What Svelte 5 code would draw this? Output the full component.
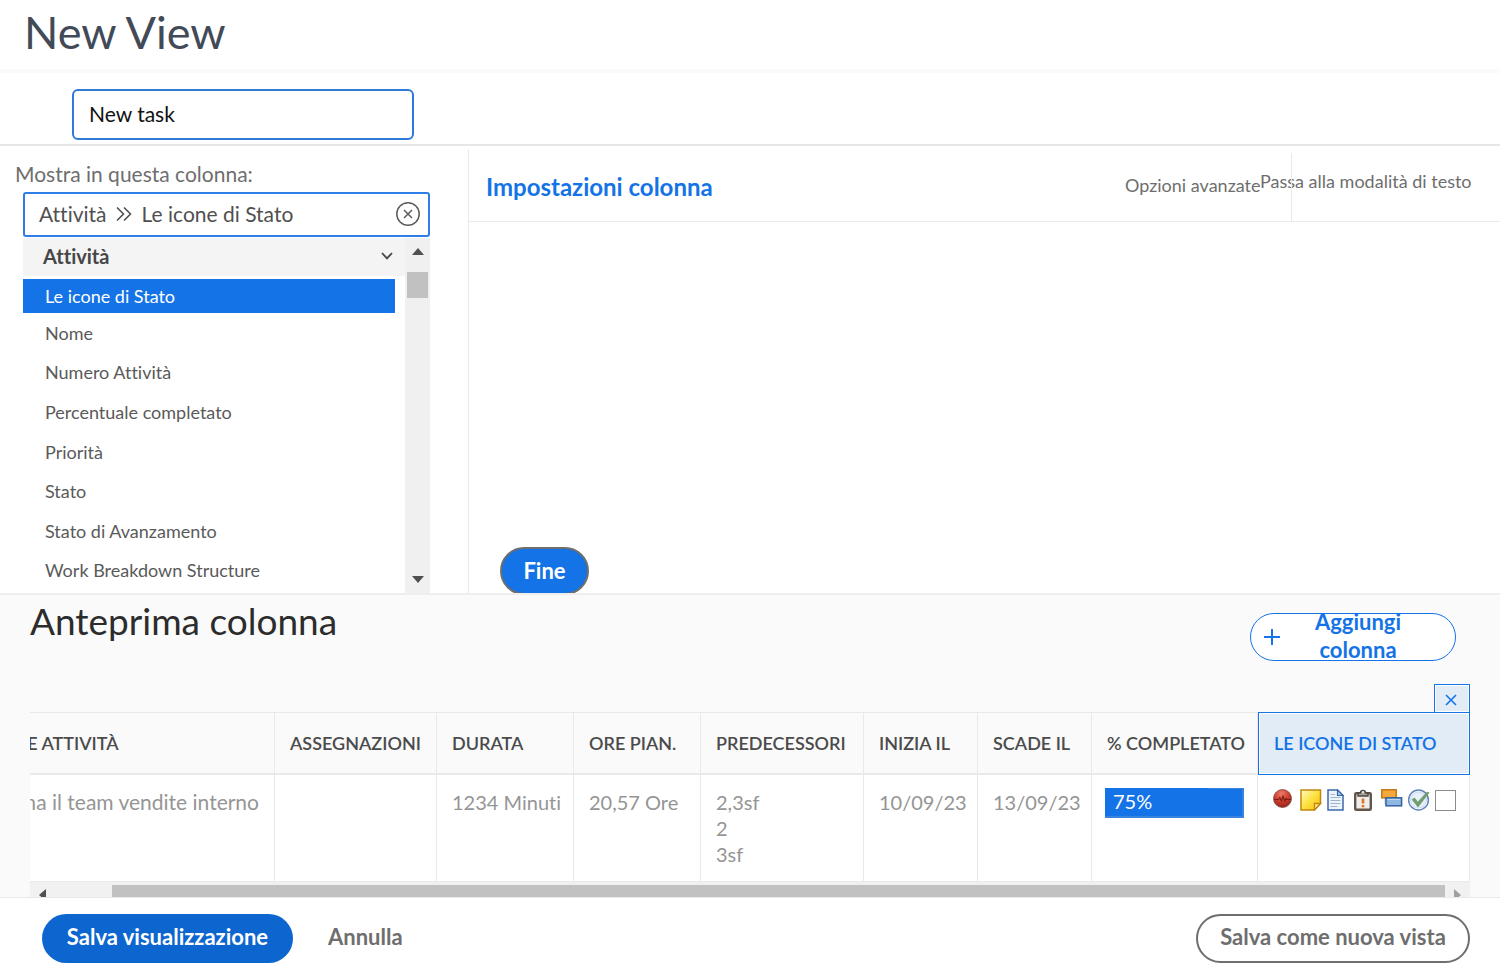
<script>
  let viewName = $state('New task');
  let field = $state('Le icone di Stato');
  const fields = [
    'Le icone di Stato',
    'Nome',
    'Numero Attività',
    'Percentuale completato',
    'Priorità',
    'Stato',
    'Stato di Avanzamento',
    'Work Breakdown Structure'
  ];
  const columns = [
    'Nome Attività',
    'Assegnazioni',
    'Durata',
    'Ore pian.',
    'Predecessori',
    'Inizia il',
    'Scade il',
    '% completato'
  ];
  const predecessors = ['2,3sf', '2', '3sf'];
  const percent = 75;
</script>

<div class="page">
  <header class="top"><h1>New View</h1></header>

  <div class="namebar">
    <input class="view-name" type="text" aria-label="View name" bind:value={viewName} />
  </div>

  <main class="work">
    <section class="picker">
      <label class="picker-label" for="field">Mostra in questa colonna:</label>
      <div class="combo">
        <span>Attività</span>
        <svg class="crumb" viewBox="0 0 16 16" aria-hidden="true">
          <path d="M1 1.5 7.5 8 1 14.5M8 1.5 14.5 8 8 14.5" />
        </svg>
        <input id="field" type="text" bind:value={field} />
        <button class="clear" type="button" aria-label="Cancella">
          <svg viewBox="0 0 24 24" aria-hidden="true">
            <circle cx="12" cy="12" r="11.2" />
            <path d="M8 8l8 8M16 8l-8 8" />
          </svg>
        </button>
      </div>
      <div class="dropdown">
        <div class="options">
          <button class="group" type="button">
            <span>Attività</span>
            <svg viewBox="0 0 12 8" aria-hidden="true"><path d="M1 1l5 5.4L11 1" /></svg>
          </button>
          <ul role="listbox" aria-label="Campi">
            {#each fields as name, i}
              <li role="option" aria-selected={i === 0} class:selected={i === 0}>{name}</li>
            {/each}
          </ul>
        </div>
        <div class="vscroll" aria-hidden="true">
          <svg viewBox="0 0 12 7"><path d="M6 0l6 7H0z" /></svg>
          <span class="vthumb"></span>
          <svg class="down" viewBox="0 0 12 7"><path d="M6 7L0 0h12z" /></svg>
        </div>
      </div>
    </section>

    <section class="settings">
      <div class="settings-head">
        <h2>Impostazioni colonna</h2>
        <nav>
          <a class="advanced" href="#avanzate">Opzioni avanzate</a>
          <a class="text-mode" href="#testo">Passa alla modalità di testo</a>
        </nav>
      </div>
      <button class="done" type="button">Fine</button>
    </section>
  </main>

  <section class="preview">
    <div class="preview-head">
      <h2>Anteprima colonna</h2>
      <button class="add" type="button">
        <svg viewBox="0 0 18 18" aria-hidden="true"><path d="M9 1v16M1 9h16" /></svg>
        <span>Aggiungi colonna</span>
      </button>
    </div>
    <div class="tab-row">
      <button class="remove" type="button" aria-label="Rimuovi colonna">
        <svg viewBox="0 0 12 12" aria-hidden="true"><path d="M1 1l10 10M11 1L1 11" /></svg>
      </button>
    </div>
    <div class="scroller">
      <table>
        <colgroup>
          <col />
          <col class="c-assign" />
          <col class="c-duration" />
          <col class="c-hours" />
          <col class="c-pred" />
          <col class="c-date" />
          <col class="c-date" />
          <col class="c-percent" />
          <col class="c-icons" />
        </colgroup>
        <thead>
          <tr>
            {#each columns as name}
              <th scope="col">{name}</th>
            {/each}
            <th scope="col" class="active">Le icone di Stato</th>
          </tr>
        </thead>
        <tbody>
          <tr>
            <td class="task">Forma il team vendite interno</td>
            <td></td>
            <td>1234 Minuti</td>
            <td>20,57 Ore</td>
            <td>{#each predecessors as p}<div>{p}</div>{/each}</td>
            <td>10/09/23</td>
            <td>13/09/23</td>
            <td class="percent">
              <div class="bar"><span class="fill" style:width="{percent}%"></span><span class="value">{percent}%</span></div>
            </td>
            <td class="status">
              <div class="icons">
                <svg viewBox="0 0 22 22" aria-hidden="true">
                  <defs>
                    <radialGradient id="red" cx=".45" cy=".25" r=".8">
                      <stop offset="0" stop-color="#ee7d6a" />
                      <stop offset=".5" stop-color="#cf3f2e" />
                      <stop offset="1" stop-color="#8a2119" />
                    </radialGradient>
                  </defs>
                  <circle cx="9.5" cy="9.5" r="9" fill="url(#red)" stroke="#7b4a42" stroke-width=".8" />
                  <path d="M1 10.500h4.500l1.300-2 1.700 3.500 1.500-5 1.700 5 1.300-2.500 1 1H18" fill="none" stroke="#7d1c14" stroke-width="1.100" />
                </svg>
                <svg viewBox="0 0 22 22" aria-hidden="true">
                  <defs>
                    <linearGradient id="note" x1="0" y1="0" x2="1" y2="1">
                      <stop offset="0" stop-color="#fffbc0" />
                      <stop offset=".5" stop-color="#ffe23f" />
                      <stop offset="1" stop-color="#f2b814" />
                    </linearGradient>
                  </defs>
                  <path d="M1 1h19.500v13.500l-6 6.500H1z" fill="url(#note)" stroke="#c2860c" stroke-width="1.500" />
                  <path d="M20.500 14.500h-6V21z" fill="#ffe98a" stroke="#c2860c" stroke-width="1.300" />
                </svg>
                <svg viewBox="0 0 22 22" aria-hidden="true">
                  <path d="M1 1h9.500L16 6.500V21H1z" fill="#edf4fc" stroke="#3b69a8" stroke-width="1.500" />
                  <path d="M10.500 1v5.500H16z" fill="#a9c8ec" stroke="#3b69a8" stroke-width="1.200" />
                  <path d="M3.500 5.500H8M3.500 8.500H13.500M3.500 11.500h10M3.500 14.500h10M3.500 17.500h7" stroke="#9fb4cf" />
                </svg>
                <svg viewBox="0 0 22 22" aria-hidden="true">
                  <rect x="1.200" y="4.200" width="15.600" height="16.600" rx="1" fill="#efeeec" stroke="#62554b" stroke-width="2.400" />
                  <path d="M4 7V4h2.500a2.500 2.500 0 0 1 5 0H14v3z" fill="#aaa39c" stroke="#4e443c" stroke-width="1.300" />
                  <circle cx="9" cy="3" r="1" fill="#fff" />
                  <path d="M9 9.500v5M9 16v2.300" stroke="#dd7220" stroke-width="2.600" />
                </svg>
                <svg viewBox="0 0 22 22" aria-hidden="true">
                  <path d="M4 9v6h3" fill="none" stroke="#b9c3cf" stroke-width="1" />
                  <rect x=".8" y=".8" width="14.400" height="8" fill="#f8a93c" stroke="#c87412" stroke-width="1.500" />
                  <rect x="5" y="8.800" width="15.600" height="8" fill="#8db8e2" stroke="#33619f" stroke-width="1.500" />
                  <path d="M6.500 10.500h12.500" stroke="#bcd7f1" />
                </svg>
                <svg viewBox="0 0 22 22" aria-hidden="true">
                  <circle cx="10.500" cy="11" r="9.900" fill="#fff" stroke="#5e85bb" stroke-width="1.500" />
                  <circle cx="10.500" cy="11" r="8" fill="#e6effa" stroke="#c9d9ee" />
                  <path d="M4 10.500l2.700-1.500 3 4.200L18.800 3.200l2.400.4L10 18z" fill="#6f9f6a" stroke="#5a8a58" stroke-width=".5" />
                </svg>
                <input type="checkbox" aria-label="Completata" />
              </div>
            </td>
          </tr>
        </tbody>
      </table>
      <div class="hscroll" aria-hidden="true">
        <svg class="arrow" viewBox="0 0 7 12"><path d="M7 0v12L0 6z" fill="#505050" /></svg>
        <span class="hthumb"></span>
        <svg class="arrow" viewBox="0 0 7 12"><path d="M0 0v12l7-6z" fill="#a0a0a0" /></svg>
      </div>
    </div>
  </section>

  <footer>
    <button class="save" type="button">Salva visualizzazione</button>
    <button class="cancel" type="button">Annulla</button>
    <button class="save-as" type="button">Salva come nuova vista</button>
  </footer>
</div>

<style>
  :global(body) {
    margin: 0;
    background: #fff;
  }
  .page {
    display: flex;
    flex-direction: column;
    min-height: 100vh;
    font-family: Lato, 'Open Sans', sans-serif;
    font-size: 21px;
    font-variant-ligatures: none;
    color: #6e6e6e;
    overflow: hidden;
  }
  .page :global(*) {
    box-sizing: border-box;
  }
  h1,
  h2 {
    margin: 0;
    font-weight: 400;
  }
  button,
  input {
    font: inherit;
    font-variant-ligatures: none;
    color: inherit;
    margin: 0;
  }
  button {
    padding: 0;
    border: 0;
    background: none;
    cursor: pointer;
  }
  a {
    color: inherit;
    text-decoration: none;
    white-space: nowrap;
  }
  svg {
    display: block;
    flex: none;
  }

  .top {
    padding: 4px 24px 9px;
    border-bottom: 4px solid #fafafa;
  }
  h1 {
    font-size: 45px;
    line-height: 56px;
    color: #424a57;
  }
  .namebar {
    padding: 16px 72px 4px;
    border-bottom: 2px solid #e6e6e6;
  }
  .view-name {
    display: block;
    width: 342px;
    height: 51px;
    padding: 0 15px 2px;
    border: 2px solid #2f79d8;
    border-radius: 6px;
    background: #fff;
    color: #111;
  }

  .work {
    flex: 1;
    display: flex;
  }
  .picker {
    display: flex;
    flex-direction: column;
    width: 468px;
    padding: 14px 38px 0 23px;
  }
  .picker-label {
    margin: 0 0 4px -8px;
    line-height: 28px;
  }
  .combo {
    display: flex;
    align-items: center;
    height: 45px;
    padding: 0 8px 2px 14px;
    border: 2px solid #2f7de6;
    border-radius: 3px;
    color: #505050;
  }
  .crumb {
    width: 16px;
    height: 16px;
    margin: 0 10px 0 9px;
    fill: none;
    stroke: #505050;
    stroke-width: 1.6;
  }
  .combo input {
    flex: 1;
    min-width: 0;
    padding: 0;
    border: 0;
    outline: 0;
    background: none;
  }
  .clear svg {
    width: 24px;
    height: 24px;
    fill: none;
    stroke: #5c5c5c;
    stroke-width: 1.5;
  }
  .dropdown {
    flex: 1;
    display: flex;
    margin-top: 1px;
  }
  .options {
    flex: 1;
    display: flex;
    flex-direction: column;
  }
  .group {
    display: flex;
    align-items: center;
    justify-content: space-between;
    height: 38px;
    padding: 0 12px 2px 20px;
    background: #f4f4f4;
    color: #464646;
    font-size: 20px;
    font-weight: 700;
  }
  .group svg {
    width: 12px;
    height: 8px;
    fill: none;
    stroke: #464646;
    stroke-width: 1.8;
  }
  ul {
    flex: 1;
    display: flex;
    flex-direction: column;
    margin: 3px 10px 3px 0;
    padding: 0;
    list-style: none;
    font-size: 18px;
    color: #5a5a5a;
  }
  li {
    flex: 1;
    display: flex;
    align-items: center;
    min-height: 34px;
    padding-left: 22px;
  }
  li.selected {
    flex: none;
    background: #1473e6;
    color: #fff;
  }
  .vscroll {
    display: flex;
    flex-direction: column;
    align-items: center;
    width: 25px;
    padding: 10px 0;
    background: #f0f0f0;
  }
  .vscroll svg {
    width: 12px;
    height: 7px;
    fill: #505050;
  }
  .vthumb {
    width: 21px;
    height: 26px;
    margin-top: 17px;
    background: #c1c1c1;
  }
  .vscroll .down {
    margin-top: auto;
  }

  .settings {
    flex: 1;
    display: flex;
    flex-direction: column;
    align-items: flex-start;
    margin-top: 3px;
    border-left: 1px solid #e9e9e9;
  }
  .settings-head {
    align-self: stretch;
    display: flex;
    align-items: center;
    justify-content: space-between;
    height: 73px;
    padding: 4px 24px 0 17px;
    border-bottom: 1px solid #e9e9e9;
  }
  .settings h2 {
    font-size: 24px;
    line-height: 28px;
    font-weight: 700;
    color: #1473e6;
  }
  nav {
    position: relative;
    align-self: stretch;
    display: flex;
    font-size: 18px;
    line-height: 24px;
  }
  nav::after {
    content: '';
    position: absolute;
    right: 184px;
    top: 0;
    bottom: 0;
    width: 1px;
    background: #e9e9e9;
  }
  .advanced {
    width: 135px;
    padding-top: 20px;
  }
  .text-mode {
    width: 216px;
    padding-top: 16px;
  }
  .done {
    height: 48px;
    width: 89px;
    margin: auto 0 -2px 31px;
    border: 2px solid #6e6e6e;
    border-radius: 24px;
    background: #1473e6;
    color: #fff;
    font-size: 22px;
    font-weight: 700;
    padding-bottom: 2px;
  }

  .preview {
    position: relative;
    padding: 0 30px;
    border-top: 2px solid #eee;
    background: #fafafa;
  }
  .preview-head {
    display: flex;
    justify-content: space-between;
    align-items: flex-start;
    padding: 4px 14px 23px 0;
  }
  .preview h2 {
    font-size: 37px;
    line-height: 44px;
    color: #2c2c2c;
  }
  .add {
    display: flex;
    align-items: center;
    width: 206px;
    height: 48px;
    margin-top: 14px;
    padding: 0 20px 0 12px;
    border: 1px solid #1473e6;
    border-radius: 24px;
    color: #1473e6;
    background: #fff;
    font-size: 22px;
    font-weight: 700;
    line-height: 28px;
  }
  .add svg {
    width: 18px;
    height: 18px;
    fill: none;
    stroke: #1473e6;
    stroke-width: 2;
  }
  .add span {
    flex: 1;
    padding: 0 24px 2px;
  }
  .tab-row {
    display: flex;
    justify-content: flex-end;
  }
  .remove {
    display: flex;
    align-items: center;
    justify-content: center;
    width: 36px;
    height: 28px;
    border: 1px solid #1473e6;
    border-bottom: 0;
    box-shadow: inset 0 0 0 1px #fff;
    background: #e1ecf7;
    padding: 3px 3px 0 0;
  }
  .remove svg {
    width: 12px;
    height: 12px;
    fill: none;
    stroke: #1473e6;
    stroke-width: 1.6;
  }
  .scroller {
    overflow: hidden;
  }
  table {
    width: calc(100% + 63px);
    margin-left: -63px;
    table-layout: fixed;
    border-collapse: separate;
    border-spacing: 0;
    font-size: 20px;
  }
  .c-assign { width: 162px; }
  .c-duration { width: 137px; }
  .c-hours { width: 127px; }
  .c-pred { width: 163px; }
  .c-date { width: 114px; }
  .c-percent { width: 166px; }
  .c-icons { width: 212px; }
  th {
    height: 63px;
    padding: 0 15px;
    border: solid #e9e9e9;
    border-width: 1px 1px 2px 0;
    text-align: left;
    text-transform: uppercase;
    white-space: nowrap;
    font-size: 18px;
    font-weight: 600;
    color: #4b4b4b;
  }
  th.active {
    border: 1px solid #1473e6;
    box-shadow: inset 0 0 0 1px #fff;
    background: #e1ecf7;
    color: #1473e6;
    padding-bottom: 2px;
  }
  td {
    height: 107px;
    padding: 14px 15px;
    border: solid #e9e9e9;
    border-width: 0 1px 1px 0;
    background: #fff;
    vertical-align: top;
    white-space: nowrap;
    line-height: 26px;
    color: #959595;
  }
  .task {
    text-align: right;
    font-size: 21px;
  }
  td.percent {
    padding: 13px 13px 0;
  }
  .bar {
    position: relative;
    height: 30px;
    border: 1px solid #3a83dd;
    border-width: 1px 2px 2px 0;
    background: #1473e6;
    color: #fff;
    line-height: 24px;
  }
  .fill {
    position: absolute;
    left: 0;
    top: -1px;
    height: 2px;
    background: #1473e6;
  }
  .value {
    padding-left: 8px;
  }
  td.status {
    padding-top: 14px;
  }
  .icons {
    display: flex;
    gap: 5px;
  }
  .icons svg {
    width: 22px;
    height: 22px;
  }
  .icons input {
    appearance: none;
    flex: none;
    width: 21px;
    height: 21px;
    margin-top: 1px;
    border: 1px solid #8c8c8c;
    background: #fff;
  }
  .hscroll {
    display: flex;
    justify-content: space-between;
    height: 15px;
    padding: 3px 9px 0;
    background: #f1f1f1;
    overflow: hidden;
  }
  .arrow {
    width: 7px;
    height: 12px;
    margin-top: 4px;
  }
  .hthumb {
    flex: 1;
    margin: 0 9px 0 66px;
    background: #c1c1c1;
  }

  footer {
    display: flex;
    align-items: flex-start;
    gap: 35px;
    padding: 16px 30px 7px 42px;
    border-top: 1px solid #e9e9e9;
    background: #fff;
    font-size: 22px;
    font-weight: 700;
  }
  footer button {
    height: 49px;
    padding: 0 0 5px;
    border-radius: 25px;
  }
  .save {
    width: 251px;
    background: #0d66d0;
    color: #fff;
  }
  .save-as {
    width: 274px;
    margin-left: auto;
    border: 2px solid #6e6e6e;
  }
</style>
